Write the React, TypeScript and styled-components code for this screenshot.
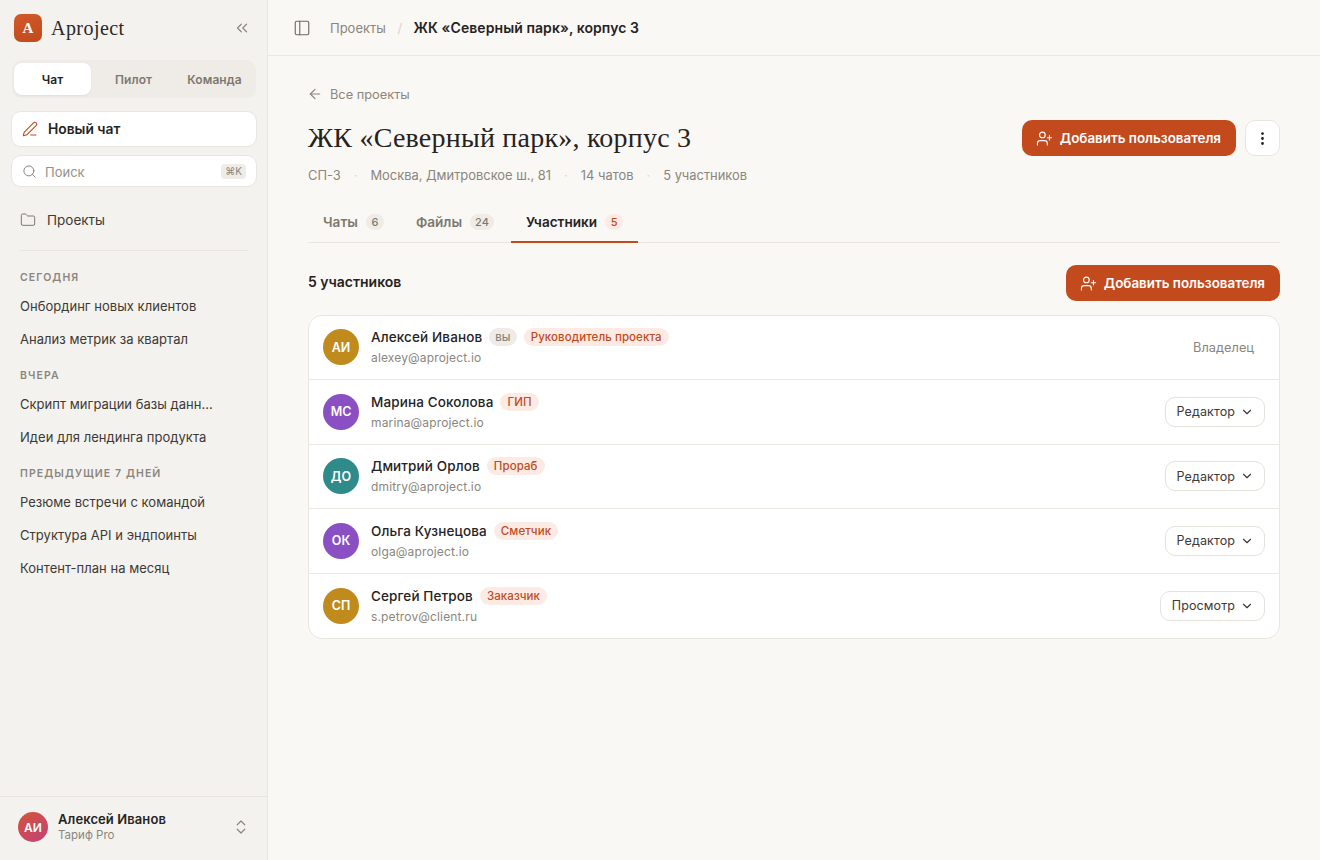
import styled, { createGlobalStyle } from "styled-components";
import {
  ArrowLeft,
  ChevronDown,
  ChevronsLeft,
  ChevronsUpDown,
  EllipsisVertical,
  Folder,
  PanelLeft,
  PenLine,
  Search,
  UserPlus,
} from "lucide-react";

const GlobalStyle = createGlobalStyle`
  html, body, #root { margin: 0; padding: 0; height: 100%; }
  body {
    font-family: Inter, "Liberation Sans", sans-serif;
    background: #faf8f5;
    color: #26231f;
    -webkit-font-smoothing: antialiased;
  }
  * { box-sizing: border-box; }
`;

const Shell = styled.div`
  display: flex;
  width: 100%;
  height: 860px;
  overflow: hidden;
`;

const Sidebar = styled.aside`
  width: 268px;
  flex-shrink: 0;
  display: flex;
  flex-direction: column;
  background: #f4f2ee;
  border-right: 1px solid #e9e6e0;
`;

const Brand = styled.div`
  height: 56px;
  display: flex;
  align-items: center;
  padding: 0 16px 0 14px;
  gap: 9px;
`;

const LogoMark = styled.div`
  width: 28px;
  height: 28px;
  border-radius: 7px;
  background: linear-gradient(160deg, #d2592a, #bf4a1b);
  color: #fff;
  font-family: "Liberation Serif", serif;
  font-weight: 700;
  font-size: 15px;
  display: flex;
  align-items: center;
  justify-content: center;
`;

const BrandName = styled.div`
  flex: 1;
  font-family: "Liberation Serif", serif;
  font-size: 20px;
  letter-spacing: 0.45px;
  color: #2b2824;
`;

const IconSlot = styled.span<{ $color?: string }>`
  display: inline-flex;
  flex-shrink: 0;
  color: ${({ $color }) => $color ?? "#8b867d"};
`;

const ModeTabs = styled.div`
  margin: 4px 11px 0 12px;
  padding: 3px 2px;
  height: 38px;
  display: flex;
  gap: 4px;
  border-radius: 10px;
  background: #efece7;
`;

const ModeTab = styled.div<{ $active?: boolean }>`
  flex: 0 0 77px;
  display: flex;
  align-items: center;
  justify-content: center;
  border-radius: 8px;
  font-size: 12px;
  font-weight: 600;
  letter-spacing: 0.1px;
  color: ${({ $active }) => ($active ? "#26231f" : "#7d786f")};
  background: ${({ $active }) => ($active ? "#ffffff" : "transparent")};
  box-shadow: ${({ $active }) => ($active ? "0 1px 2px rgba(40,30,20,0.06)" : "none")};
`;

const NewChat = styled.div`
  margin: 13px 10px 0 11px;
  height: 36px;
  display: flex;
  align-items: center;
  gap: 10px;
  padding: 0 10px;
  background: #fff;
  border: 1px solid #e9e6e0;
  border-radius: 10px;
  font-size: 13.8px;
  font-weight: 600;
  color: #26231f;
`;

const SearchBox = styled.div`
  margin: 8px 10px 0 11px;
  height: 32px;
  display: flex;
  align-items: center;
  gap: 8px;
  padding: 1px 10px 0;
  background: #fff;
  border: 1px solid #e9e6e0;
  border-radius: 10px;
  font-size: 13px;
  color: #96918a;
`;

const SearchLabel = styled.span`
  flex: 1;
`;

const Kbd = styled.span`
  height: 15px;
  padding: 0 4px;
  margin-top: -1px;
  display: flex;
  align-items: center;
  border-radius: 4px;
  background: #efece7;
  font-size: 10px;
  color: #8b867d;
`;

const ProjectsLink = styled.div`
  margin-top: 17px;
  padding: 0 20px;
  height: 32px;
  display: flex;
  align-items: center;
  gap: 11px;
  font-size: 13.5px;
  color: #3d3934;
`;

const Divider = styled.div`
  height: 1px;
  margin: 14px 19px 0 20px;
  background: #e9e6e0;
`;

const History = styled.div`
  flex: 1;
  padding: 14px 20px 0;
`;

const GroupTitle = styled.div<{ $first?: boolean }>`
  height: 24px;
  margin-top: ${({ $first }) => ($first ? "0" : "8px")};
  display: flex;
  align-items: center;
  font-size: 10.5px;
  font-weight: 600;
  letter-spacing: 1.1px;
  color: #8b867d;
  text-transform: uppercase;
`;

const HistoryItem = styled.div`
  height: 33px;
  display: flex;
  align-items: center;
  font-size: 13px;
  letter-spacing: 0.03px;
  color: #3d3934;
  white-space: nowrap;
  overflow: hidden;
`;

const UserFooter = styled.div`
  height: 64px;
  border-top: 1px solid #e9e6e0;
  padding: 0 17px 3px 18px;
  display: flex;
  align-items: center;
  gap: 10px;
`;

const FooterAvatar = styled.div`
  width: 30px;
  height: 30px;
  border-radius: 50%;
  background: linear-gradient(145deg, #d4543a, #c2417a);
  color: #fff;
  font-size: 12px;
  font-weight: 600;
  display: flex;
  align-items: center;
  justify-content: center;
`;

const FooterText = styled.div`
  flex: 1;
  display: flex;
  flex-direction: column;
  gap: 1px;
  padding-bottom: 2px;
`;

const FooterName = styled.div`
  font-size: 13px;
  font-weight: 600;
  letter-spacing: 0.1px;
  color: #26231f;
`;

const FooterPlan = styled.div`
  font-size: 11.5px;
  color: #8b867d;
`;

const Main = styled.main`
  flex: 1;
  min-width: 0;
  display: flex;
  flex-direction: column;
`;

const TopBar = styled.header`
  height: 56px;
  flex-shrink: 0;
  display: flex;
  align-items: center;
  padding: 0 25px;
  border-bottom: 1px solid #ebe8e2;
  font-size: 13px;
`;

const Crumb = styled.span`
  margin-left: 19px;
  color: #8b867d;
`;

const CrumbSep = styled.span`
  margin: 0 11.5px;
  color: #d9d5cd;
`;

const CrumbCurrent = styled.span`
  font-size: 14px;
  letter-spacing: 0.07px;
  font-weight: 600;
  color: #26231f;
`;

const Content = styled.div`
  padding: 30px 40px 0;
`;

const BackLink = styled.div`
  height: 16px;
  display: flex;
  align-items: center;
  gap: 7px;
  font-size: 12.8px;
  color: #8b867d;
`;

const BackIcon = styled(ArrowLeft)`
  margin-left: -1px;
`;

const TitleRow = styled.div`
  margin-top: 18px;
  display: flex;
  align-items: center;
  justify-content: space-between;
`;

const Title = styled.h1`
  margin: 0;
  font-family: "Liberation Serif", serif;
  font-size: 28px;
  line-height: 36px;
  font-weight: 400;
  letter-spacing: 0.22px;
  color: #26231f;
`;

const Actions = styled.div`
  display: flex;
  gap: 9px;
`;

const PrimaryButton = styled.button`
  height: 36px;
  padding: 0 15px 0 14px;
  display: flex;
  align-items: center;
  gap: 7px;
  border: none;
  border-radius: 10px;
  background: #c24a1c;
  color: #fff;
  font-family: inherit;
  font-size: 13.4px;
  font-weight: 600;
`;

const MoreButton = styled.button`
  width: 35px;
  height: 36px;
  display: flex;
  align-items: center;
  justify-content: center;
  padding: 0;
  border: 1px solid #e9e6e0;
  border-radius: 10px;
  background: #fff;
  color: #26231f;
`;

const MetaRow = styled.div`
  margin-top: 11px;
  display: flex;
  font-size: 12.9px;
  color: #8b867d;
  line-height: 18px;
`;

const MetaItem = styled.span`
  & + &::before {
    content: "·";
    margin: 0 13px;
    color: #dedad3;
  }
`;

const Tabs = styled.div`
  margin-top: 19px;
  height: 39px;
  display: flex;
  border-bottom: 1px solid #e9e6e0;
`;

const Tab = styled.div<{ $active?: boolean }>`
  height: 39px;
  padding: 0 15px 2px;
  margin-right: 2px;
  display: flex;
  align-items: center;
  gap: 8px;
  font-size: 13.6px;
  font-weight: 600;
  color: ${({ $active }) => ($active ? "#26231f" : "#7d786f")};
  border-bottom: 2px solid ${({ $active }) => ($active ? "#c24a1c" : "transparent")};
`;

const TabCount = styled.span<{ $active?: boolean }>`
  min-width: 18px;
  height: 16px;
  padding: 0 5px;
  display: flex;
  align-items: center;
  justify-content: center;
  border-radius: 8px;
  font-size: 11px;
  font-weight: 500;
  color: ${({ $active }) => ($active ? "#c24a1c" : "#7d786f")};
  background: ${({ $active }) => ($active ? "#fcebe4" : "#efece7")};
`;

const SectionHead = styled.div`
  margin-top: 22px;
  display: flex;
  align-items: center;
  justify-content: space-between;
`;

const SectionTitle = styled.div`
  padding-bottom: 4px;
  font-size: 14px;
  font-weight: 600;
  color: #26231f;
`;

const MemberCard = styled.div`
  margin-top: 13.7px;
  background: #fff;
  border: 1px solid #e9e6e0;
  border-radius: 14px;
  overflow: hidden;
`;

const MemberRow = styled.div`
  height: 64.5px;
  padding: 0 14px;
  display: flex;
  align-items: center;
  gap: 12px;
  border-bottom: 1px solid #ebe8e2;
  &:last-child {
    border-bottom: none;
    height: 64px;
  }
`;

const Avatar = styled.div<{ $color: string }>`
  width: 36px;
  height: 36px;
  flex-shrink: 0;
  border-radius: 50%;
  background: ${({ $color }) => $color};
  color: #fff;
  font-size: 12.5px;
  font-weight: 600;
  display: flex;
  align-items: center;
  justify-content: center;
`;

const MemberInfo = styled.div`
  flex: 1;
  min-width: 0;
`;

const NameLine = styled.div`
  display: flex;
  align-items: center;
  gap: 7px;
  height: 20px;
`;

const MemberName = styled.span`
  font-size: 13.5px;
  font-weight: 500;
  letter-spacing: 0.12px;
  color: #26231f;
`;

const Badge = styled.span<{ $muted?: boolean }>`
  height: 18px;
  padding: 0 ${({ $muted }) => ($muted ? "6px" : "7px")};
  display: flex;
  align-items: center;
  border-radius: 9px;
  font-size: 11.5px;
  font-weight: 500;
  letter-spacing: 0.08px;
  color: ${({ $muted }) => ($muted ? "#8b867d" : "#c24a1c")};
  background: ${({ $muted }) => ($muted ? "#efece7" : "#fcebe4")};
`;

const MemberEmail = styled.div`
  margin-top: 2px;
  font-size: 12px;
  letter-spacing: 0.15px;
  line-height: 18px;
  color: #8b867d;
`;

const OwnerLabel = styled.div`
  padding-right: 11px;
  font-size: 12.8px;
  color: #8b867d;
`;

const RoleSelect = styled.div`
  height: 30px;
  padding: 0 10px 0 11px;
  display: flex;
  align-items: center;
  gap: 5px;
  border: 1px solid #e5e2dc;
  border-radius: 10px;
  background: #fff;
  font-size: 12.5px;
  letter-spacing: 0.1px;
  color: #3d3934;
`;

const members = [
  { initials: "АИ", color: "#c18a1c", name: "Алексей Иванов", you: true, badge: "Руководитель проекта", email: "alexey@aproject.io", role: null },
  { initials: "МС", color: "#8a4fc2", name: "Марина Соколова", badge: "ГИП", email: "marina@aproject.io", role: "Редактор" },
  { initials: "ДО", color: "#2f8a8a", name: "Дмитрий Орлов", badge: "Прораб", email: "dmitry@aproject.io", role: "Редактор" },
  { initials: "ОК", color: "#8a4fc2", name: "Ольга Кузнецова", badge: "Сметчик", email: "olga@aproject.io", role: "Редактор" },
  { initials: "СП", color: "#c18a1c", name: "Сергей Петров", badge: "Заказчик", email: "s.petrov@client.ru", role: "Просмотр" },
];

const history = [
  { title: "Сегодня", items: ["Онбординг новых клиентов", "Анализ метрик за квартал"] },
  { title: "Вчера", items: ["Скрипт миграции базы данн...", "Идеи для лендинга продукта"] },
  { title: "Предыдущие 7 дней", items: ["Резюме встречи с командой", "Структура API и эндпоинты", "Контент-план на месяц"] },
];

export default function App() {
  return (
    <>
      <GlobalStyle />
      <Shell>
        <Sidebar>
          <Brand>
            <LogoMark>A</LogoMark>
            <BrandName>Aproject</BrandName>
            <IconSlot>
              <ChevronsLeft size={18} strokeWidth={1.6} />
            </IconSlot>
          </Brand>
          <ModeTabs>
            <ModeTab $active>Чат</ModeTab>
            <ModeTab>Пилот</ModeTab>
            <ModeTab>Команда</ModeTab>
          </ModeTabs>
          <NewChat>
            <IconSlot $color="#c24a1c">
              <PenLine size={16} strokeWidth={1.6} />
            </IconSlot>
            Новый чат
          </NewChat>
          <SearchBox>
            <IconSlot>
              <Search size={15} strokeWidth={1.6} />
            </IconSlot>
            <SearchLabel>Поиск</SearchLabel>
            <Kbd>⌘K</Kbd>
          </SearchBox>
          <ProjectsLink>
            <IconSlot $color="#7d786f">
              <Folder size={16} strokeWidth={1.5} />
            </IconSlot>
            Проекты
          </ProjectsLink>
          <Divider />
          <History>
            {history.map((group, i) => (
              <div key={group.title}>
                <GroupTitle $first={i === 0}>{group.title}</GroupTitle>
                {group.items.map((item) => (
                  <HistoryItem key={item}>{item}</HistoryItem>
                ))}
              </div>
            ))}
          </History>
          <UserFooter>
            <FooterAvatar>АИ</FooterAvatar>
            <FooterText>
              <FooterName>Алексей Иванов</FooterName>
              <FooterPlan>Тариф Pro</FooterPlan>
            </FooterText>
            <IconSlot>
              <ChevronsUpDown size={18} strokeWidth={1.6} />
            </IconSlot>
          </UserFooter>
        </Sidebar>
        <Main>
          <TopBar>
            <IconSlot $color="#6f6a62">
              <PanelLeft size={18} strokeWidth={1.5} />
            </IconSlot>
            <Crumb>Проекты</Crumb>
            <CrumbSep>/</CrumbSep>
            <CrumbCurrent>ЖК «Северный парк», корпус 3</CrumbCurrent>
          </TopBar>
          <Content>
            <BackLink>
              <BackIcon size={16} strokeWidth={1.8} />
              Все проекты
            </BackLink>
            <TitleRow>
              <Title>ЖК «Северный парк», корпус 3</Title>
              <Actions>
                <PrimaryButton>
                  <UserPlus size={17} strokeWidth={1.6} />
                  Добавить пользователя
                </PrimaryButton>
                <MoreButton>
                  <EllipsisVertical size={17} strokeWidth={2} />
                </MoreButton>
              </Actions>
            </TitleRow>
            <MetaRow>
              <MetaItem>СП-3</MetaItem>
              <MetaItem>Москва, Дмитровское ш., 81</MetaItem>
              <MetaItem>14 чатов</MetaItem>
              <MetaItem>5 участников</MetaItem>
            </MetaRow>
            <Tabs>
              <Tab>
                Чаты <TabCount>6</TabCount>
              </Tab>
              <Tab>
                Файлы <TabCount>24</TabCount>
              </Tab>
              <Tab $active>
                Участники <TabCount $active>5</TabCount>
              </Tab>
            </Tabs>
            <SectionHead>
              <SectionTitle>5 участников</SectionTitle>
              <PrimaryButton>
                <UserPlus size={17} strokeWidth={1.6} />
                Добавить пользователя
              </PrimaryButton>
            </SectionHead>
            <MemberCard>
              {members.map((m) => (
                <MemberRow key={m.email}>
                  <Avatar $color={m.color}>{m.initials}</Avatar>
                  <MemberInfo>
                    <NameLine>
                      <MemberName>{m.name}</MemberName>
                      {m.you && <Badge $muted>вы</Badge>}
                      <Badge>{m.badge}</Badge>
                    </NameLine>
                    <MemberEmail>{m.email}</MemberEmail>
                  </MemberInfo>
                  {m.role ? (
                    <RoleSelect>
                      {m.role}
                      <ChevronDown size={14} strokeWidth={2} />
                    </RoleSelect>
                  ) : (
                    <OwnerLabel>Владелец</OwnerLabel>
                  )}
                </MemberRow>
              ))}
            </MemberCard>
          </Content>
        </Main>
      </Shell>
    </>
  );
}
